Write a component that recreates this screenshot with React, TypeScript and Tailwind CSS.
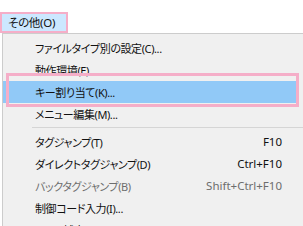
import React from "react";

type Item = { label: string; key?: string; disabled?: boolean; active?: boolean } | "sep";

const items: Item[] = [
  { label: "ファイルタイプ別の設定(C)..." },
  { label: "動作環境(E)..." },
  { label: "キー割り当て(K)...", active: true },
  { label: "メニュー編集(M)..." },
  "sep",
  { label: "タグジャンプ(T)", key: "F10" },
  { label: "ダイレクトタグジャンプ(D)", key: "Ctrl+F10" },
  { label: "バックタグジャンプ(B)", key: "Shift+Ctrl+F10", disabled: true },
  { label: "制御コード入力(I)..." },
  { label: "ワード補完(W)..." },
];

const font = { fontFamily: '"Noto Sans", "Noto Sans CJK JP", sans-serif' };

export default function App() {
  return (
    <div
      className="relative w-[303px] h-[226px] overflow-hidden bg-white text-[#111] [font-feature-settings:'palt']"
      style={font}
    >
      {/* menu bar */}
      <div className="h-[33px] pt-[12px]">
        <div className="w-[68px] h-[21px] border-2 border-[#f5aec8] bg-[#cce8ff] pl-[6px] flex items-center leading-none text-[11.5px] tracking-[-0.3px]">
          その他(O)
        </div>
      </div>

      {/* dropdown */}
      <div className="ml-[2px] w-[320px] border-l border-t border-[#cccccc] bg-[#f0f0f0] pt-[3px] pb-4">
        {items.map((it, i) =>
          it === "sep" ? (
            <div key={i} className="h-[6px] pt-[2px] pl-[29px]">
              <div className="h-px bg-[#d5d5d5]" />
            </div>
          ) : (
            <div
              key={i}
              className={`w-[294px] h-[22px] flex items-center pl-[32px] pr-[15px] leading-none ${
                it.active ? "bg-[#91c9f7]" : ""
              } ${it.disabled ? "text-[#6d6d6d]" : ""}`}
            >
              <span className="flex-1 text-[11px] tracking-[-0.4px]">{it.label}</span>
              {it.key && <span className="text-[11.5px]">{it.key}</span>}
            </div>
          )
        )}
      </div>

      {/* annotation box */}
      <div className="absolute left-[6px] top-[73px] w-[293px] h-[34px] border-[3px] border-[#f5aec8]" />
    </div>
  );
}
